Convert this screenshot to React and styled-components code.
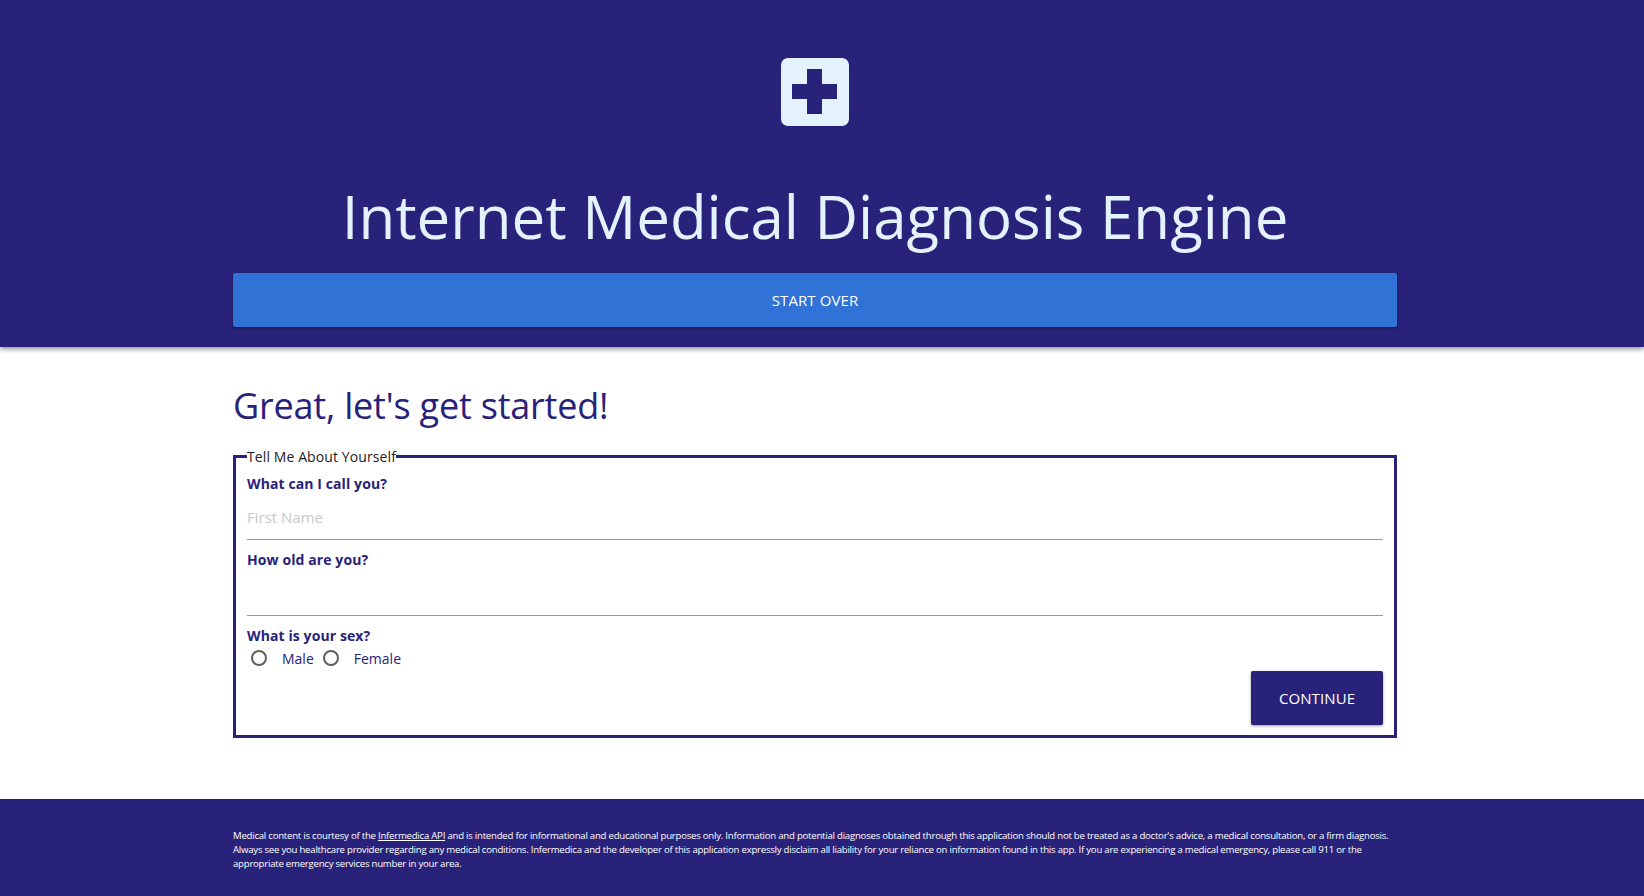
import React from 'react';
import styled, { createGlobalStyle } from 'styled-components';

const NAVY = '#29227a';
const ICE = '#e3f2fd';

const GlobalStyle = createGlobalStyle`
  html, body {
    margin: 0;
    padding: 0;
    background: white;
    font-family: "Open Sans", "Noto Sans", sans-serif;
  }
  * {
    box-sizing: border-box;
  }
`;

const Page = styled.div`
  width: 100%;
  height: 896px;
  display: flex;
  flex-direction: column;
  overflow: hidden;
`;

const Header = styled.header`
  background: ${NAVY};
  height: 347px;
  flex-shrink: 0;
  padding: 58px 14px 0 0;
  display: flex;
  flex-direction: column;
  align-items: center;
  box-shadow: 0 2px 5px rgba(0,0,0,0.45);
  position: relative;
`;

const Logo = styled.svg`
  width: 68px;
  height: 68px;
  display: block;
`;

const Title = styled.h1`
  color: ${ICE};
  font-size: 60px;
  font-weight: 400;
  line-height: 80px;
  letter-spacing: 0;
  margin: 50px 0 0;
  text-align: center;
`;

const Column = styled.div`
  width: 1164px;
  margin: 0 auto;
`;

const Button = styled.button`
  display: block;
  border: none;
  border-radius: 2px;
  color: white;
  font-family: inherit;
  font-size: 15px;
  line-height: 54px;
  height: 54px;
  padding: 0;
  text-transform: uppercase;
  letter-spacing: 0.1px;
  cursor: pointer;
  box-shadow: 0 1px 3px rgba(0,0,0,0.4);
  background: ${(p) => (p.$primary ? NAVY : '#3072d5')};
  width: ${(p) => (p.$primary ? '132px' : '1164px')};
`;

const StartOver = styled(Column)`
  margin-top: 17px;
`;

const Main = styled.main`
  flex: 1;
  padding-right: 14px;
`;

const Heading = styled.h2`
  color: ${NAVY};
  font-size: 36px;
  font-weight: 400;
  line-height: 48px;
  letter-spacing: -0.2px;
  margin: 35px 0 0;
`;

const Box = styled.fieldset`
  border: 3px solid ${NAVY};
  margin: 16px 0 0;
  padding: 0 11px;
  height: 292px;
  min-width: 0;
`;

const Legend = styled.legend`
  color: #222;
  font-size: 14px;
  line-height: 18px;
  letter-spacing: 0.1px;
  padding: 2px 0 0;
`;

const Label = styled.label`
  display: block;
  color: ${NAVY};
  font-size: 14px;
  font-weight: 700;
  line-height: 20px;
  letter-spacing: 0.1px;
`;

const Field = styled.div`
  margin-top: ${(p) => (p.$first ? '8px' : '10px')};
`;

const TextInput = styled.input`
  display: block;
  width: 100%;
  height: 46px;
  border: none;
  border-bottom: 1px solid #999;
  outline: none;
  padding: 0;
  font-family: inherit;
  font-size: 15px;
  color: ${NAVY};
  background: transparent;

  &::placeholder {
    color: #c8c8c8;
    opacity: 1;
  }
`;

const RadioRow = styled.div`
  display: flex;
  align-items: center;
  height: 24px;
  padding-left: 4px;
`;

const RadioRing = styled.span`
  width: 16px;
  height: 16px;
  border: 2px solid #5f5f5f;
  border-radius: 50%;
  flex-shrink: 0;
`;

const RadioLabel = styled.span`
  color: ${NAVY};
  font-size: 14px;
  margin: 0 9px 0 15px;
`;

const Actions = styled.div`
  display: flex;
  justify-content: flex-end;
  margin-top: 1px;
`;

const Footer = styled.footer`
  background: ${NAVY};
  height: 97px;
  flex-shrink: 0;
  padding: 30px 14px 0 0;
`;

const Legal = styled.p`
  color: white;
  font-size: 9.6px;
  line-height: 14px;
  letter-spacing: -0.23px;
  margin: 0;

  a {
    color: white;
  }
`;

const App = () => (
  <Page>
    <GlobalStyle />
    <Header>
      <Logo viewBox="0 0 68 68">
        <rect width="68" height="68" rx="7" fill={ICE} />
        <path d="M26 11h15v15h15v15H41v15H26V41H11V26h15z" fill={NAVY} />
      </Logo>
      <Title>Internet Medical Diagnosis Engine</Title>
      <StartOver>
        <Button>Start Over</Button>
      </StartOver>
    </Header>
    <Main>
      <Column>
        <Heading>Great, let's get started!</Heading>
        <Box>
          <Legend>Tell Me About Yourself</Legend>
          <Field $first>
            <Label htmlFor="first-name">What can I call you?</Label>
            <TextInput id="first-name" type="text" placeholder="First Name" />
          </Field>
          <Field>
            <Label htmlFor="age">How old are you?</Label>
            <TextInput id="age" type="text" />
          </Field>
          <Field>
            <Label>What is your sex?</Label>
            <RadioRow>
              <RadioRing />
              <RadioLabel>Male</RadioLabel>
              <RadioRing />
              <RadioLabel>Female</RadioLabel>
            </RadioRow>
          </Field>
          <Actions>
            <Button $primary>Continue</Button>
          </Actions>
        </Box>
      </Column>
    </Main>
    <Footer>
      <Column>
        <Legal>
          Medical content is courtesy of the <a href="#infermedica">Infermedica API</a> and is intended for informational and educational purposes only. Information and potential diagnoses obtained through this application should not be treated as a doctor's advice, a medical consultation, or a firm diagnosis. Always see you healthcare provider regarding any medical conditions. Infermedica and the developer of this application expressly disclaim all liability for your reliance on information found in this app. If you are experiencing a medical emergency, please call 911 or the appropriate emergency services number in your area.
        </Legal>
      </Column>
    </Footer>
  </Page>
);

export default App;
